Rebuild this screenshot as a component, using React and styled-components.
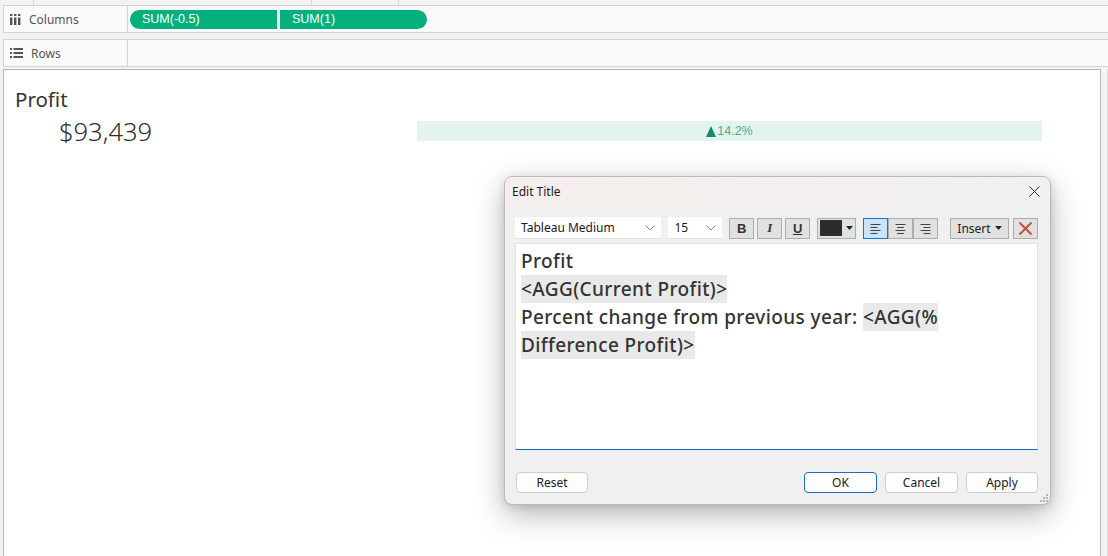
import React from "react";
import styled, { createGlobalStyle } from "styled-components";

const GlobalStyle = createGlobalStyle`
  html, body {
    margin: 0;
    padding: 0;
    background: #f3f3f3;
    overflow: hidden;
  }
  body {
    width: 1108px;
    height: 556px;
    font-family: "Noto Sans", "Open Sans", sans-serif;
  }
`;

const Page = styled.div`
  position: relative;
  display: flex;
  flex-direction: column;
  height: 556px;
  padding-left: 3px;
  box-sizing: border-box;
`;

const TopStrip = styled.div`
  display: flex;
  height: 5px;
  margin-left: -3px;
`;

const StripCell = styled.div`
  width: ${(p) => p.w}px;
  border-right: 1px solid #d6d6d6;
`;

const Shelf = styled.div`
  display: flex;
  height: 26px;
  border-top: 1px solid #d2d2d2;
  border-bottom: 1px solid #d2d2d2;
  border-left: 1px solid #d2d2d2;
  background: #fafafa;
  margin-bottom: ${(p) => p.mb}px;
`;

const ShelfLabel = styled.div`
  display: flex;
  align-items: center;
  gap: 8px;
  width: 124px;
  padding-left: 6px;
  box-sizing: border-box;
  border-right: 1px solid #d2d2d2;
  font-size: 12px;
  color: #555;
`;

const PillRow = styled.div`
  display: flex;
  align-items: center;
  gap: 3px;
  padding-left: 2px;
`;

const Pill = styled.div`
  width: 147px;
  height: 19px;
  box-sizing: border-box;
  padding-left: 12px;
  display: flex;
  align-items: center;
  background: #02b07d;
  color: #fff;
  font-family: "Liberation Sans", Arial, sans-serif;
  font-size: 12.5px;
  border-radius: ${(p) => (p.side === "left" ? "10px 0 0 10px" : "0 10px 10px 0")};
`;

const ViewRow = styled.div`
  display: flex;
  flex: 1;
`;

const View = styled.div`
  flex: 1;
  background: #fff;
  border: 1px solid #b4b4b4;
  border-bottom: none;
  padding: 16px 0 0 11px;
`;

const Gutter = styled.div`
  width: 7px;
  border-right: 1px solid #dcdcdc;
  box-sizing: border-box;
`;

const Title = styled.div`
  font-size: 20.5px;
  line-height: 26px;
  color: #333;
`;

const KpiRow = styled.div`
  display: flex;
  align-items: center;
  margin-top: 7px;
  margin-left: -11px;
`;

const KpiValue = styled.div`
  width: 413px;
  box-sizing: border-box;
  padding-left: 55px;
  font-size: 25.5px;
  font-weight: 300;
  color: #2e2e2e;
  line-height: 24px;
`;

const Band = styled.div`
  width: 625px;
  height: 20px;
  background: #e3f3ee;
  display: flex;
  align-items: center;
  justify-content: center;
  font-family: "Liberation Sans", Arial, sans-serif;
  font-size: 12.5px;
  color: #46b08c;
  gap: 1px;
`;

/* dialog */

const Dialog = styled.div`
  position: absolute;
  left: 504px;
  top: 176px;
  width: 547px;
  height: 329px;
  box-sizing: border-box;
  border: 1px solid #b9b9b9;
  border-radius: 8px;
  background: #f0f0f0;
  box-shadow: 0 10px 30px rgba(0, 0, 0, 0.28), 0 2px 8px rgba(0, 0, 0, 0.12);
  display: flex;
  flex-direction: column;
  overflow: hidden;
  font-size: 12px;
  color: #1b1b1b;
`;

const TitleBar = styled.div`
  height: 29px;
  display: flex;
  align-items: center;
  justify-content: space-between;
  padding: 0 10px 0 7px;
  background: linear-gradient(90deg, #f6eeec 0%, #f3f0ef 60%, #f2f1f1 100%);
`;

const Body = styled.div`
  flex: 1;
  display: flex;
  flex-direction: column;
  padding: 11px 12px 11px 10px;
`;

const Toolbar = styled.div`
  display: flex;
  align-items: center;
  gap: 7px;
  height: 22px;
`;

const Group = styled.div`
  display: flex;
  gap: ${(p) => p.gap || 0}px;
  margin-left: ${(p) => p.ml || 0}px;
`;

const Select = styled.div`
  width: ${(p) => p.w}px;
  height: 22px;
  box-sizing: border-box;
  background: #fff;
  border-bottom: 1px solid #e4e4e4;
  display: flex;
  align-items: center;
  justify-content: space-between;
  padding: 0 6px 0 6px;
  font-size: 12px;
`;

const ToolButton = styled.div`
  width: ${(p) => p.w || 25}px;
  height: 21px;
  box-sizing: border-box;
  border: 1px solid ${(p) => (p.active ? "#0a78d4" : "#adadad")};
  background: ${(p) => (p.active ? "#cce4f7" : "#e1e1e1")};
  display: flex;
  align-items: center;
  justify-content: center;
  gap: 4px;
  font-size: 12px;
  color: #222;
`;

const Glyph = styled.span`
  font-family: ${(p) => (p.serif ? '"Liberation Serif", serif' : '"Liberation Sans", Arial, sans-serif')};
  font-weight: bold;
  font-style: ${(p) => (p.italic ? "italic" : "normal")};
  text-decoration: ${(p) => (p.under ? "underline" : "none")};
  font-size: 13px;
  color: #333;
`;

const Swatch = styled.div`
  width: 22px;
  height: 16px;
  background: #2b2b2b;
`;

const Editor = styled.div`
  margin-top: 4px;
  height: 207px;
  box-sizing: border-box;
  background: #fff;
  border: 1px solid #e2e2e2;
  border-bottom: 1px solid #0f6cc6;
  padding: 3px 5px;
  font-size: 19px;
  font-weight: 500;
  letter-spacing: 0.4px;
  line-height: 28px;
  color: #333;
`;

const Field = styled.span`
  display: inline-block;
  background: #e9e9e9;
`;

const Footer = styled.div`
  display: flex;
  align-items: center;
  gap: 8px;
  margin-top: 22px;
  padding-left: 1px;
`;

const DlgButton = styled.div`
  width: ${(p) => p.w || 73}px;
  height: 21px;
  box-sizing: border-box;
  border: 1px solid ${(p) => (p.primary ? "#1a6fc4" : "#cfcfcf")};
  border-radius: 4px;
  background: #fdfdfd;
  display: flex;
  align-items: center;
  justify-content: center;
  font-size: 12px;
  color: #1b1b1b;
  margin-left: ${(p) => (p.push ? "auto" : "0")};
`;

const Grip = styled.svg`
  position: absolute;
  right: 2px;
  bottom: 2px;
`;

const Chevron = () => (
  <svg width="10" height="6" viewBox="0 0 10 6">
    <polyline points="0.5,0.5 5,5 9.5,0.5" fill="none" stroke="#888" strokeWidth="1" />
  </svg>
);

const Caret = () => (
  <svg width="7" height="4" viewBox="0 0 7 4">
    <polygon points="0,0 7,0 3.5,4" fill="#222" />
  </svg>
);

const AlignIcon = ({ mode }) => {
  const rows = [
    [10, 2],
    [7, 5],
    [10, 8],
    [7, 11],
  ];
  return (
    <svg width="11" height="12" viewBox="0 0 11 12">
      {rows.map(([w, y], i) => {
        const x = mode === "left" ? 0.5 : mode === "right" ? 10.5 - w : (11 - w) / 2;
        return <line key={i} x1={x} y1={y + 0.5} x2={x + w} y2={y + 0.5} stroke="#444" strokeWidth="1" />;
      })}
    </svg>
  );
};

const ColumnsIcon = () => (
  <svg width="11" height="11" viewBox="0 0 11 11">
    {[0, 4, 8].map((x) => (
      <g key={x} fill="#555">
        <rect x={x} y="0" width="2.4" height="2" />
        <rect x={x} y="3.5" width="2.4" height="7.5" />
      </g>
    ))}
  </svg>
);

const RowsIcon = () => (
  <svg width="13" height="10" viewBox="0 0 13 10">
    {[0, 4, 8].map((y) => (
      <g key={y} fill="#555">
        <rect x="0" y={y} width="2" height="2" />
        <rect x="3.5" y={y} width="9.5" height="2" />
      </g>
    ))}
  </svg>
);

const UpTriangle = () => (
  <svg width="10" height="11" viewBox="0 0 10 11">
    <polygon points="5,0 10,11 0,11" fill="#138a6a" />
  </svg>
);

export default function App() {
  return (
    <>
      <GlobalStyle />
      <Page>
        <TopStrip>
          <StripCell w={33} />
          <StripCell w={277} />
          <StripCell w={86} />
        </TopStrip>
        <Shelf mb={6}>
          <ShelfLabel>
            <ColumnsIcon />
            Columns
          </ShelfLabel>
          <PillRow>
            <Pill side="left">SUM(-0.5)</Pill>
            <Pill side="right">SUM(1)</Pill>
          </PillRow>
        </Shelf>
        <Shelf mb={2}>
          <ShelfLabel>
            <RowsIcon />
            Rows
          </ShelfLabel>
        </Shelf>
        <ViewRow>
          <View>
            <Title>Profit</Title>
            <KpiRow>
              <KpiValue>$93,439</KpiValue>
              <Band>
                <UpTriangle />
                14.2%
              </Band>
            </KpiRow>
          </View>
          <Gutter />
        </ViewRow>

        <Dialog>
          <TitleBar>
            <span>Edit Title</span>
            <svg width="11" height="11" viewBox="0 0 11 11">
              <path d="M0.5 0.5 L10.5 10.5 M10.5 0.5 L0.5 10.5" stroke="#333" strokeWidth="1" />
            </svg>
          </TitleBar>
          <Body>
            <Toolbar>
              <Select w={147}>
                Tableau Medium
                <Chevron />
              </Select>
              <Select w={54}>
                15
                <Chevron />
              </Select>
              <Group gap={3}>
                <ToolButton>
                  <Glyph>B</Glyph>
                </ToolButton>
                <ToolButton>
                  <Glyph serif italic>
                    I
                  </Glyph>
                </ToolButton>
                <ToolButton>
                  <Glyph under>U</Glyph>
                </ToolButton>
              </Group>
              <ToolButton w={39}>
                <Swatch />
                <Caret />
              </ToolButton>
              <Group>
                <ToolButton active>
                  <AlignIcon mode="left" />
                </ToolButton>
                <ToolButton>
                  <AlignIcon mode="center" />
                </ToolButton>
                <ToolButton>
                  <AlignIcon mode="right" />
                </ToolButton>
              </Group>
              <Group gap={4} ml={5}>
                <ToolButton w={59}>
                  Insert
                  <Caret />
                </ToolButton>
                <ToolButton>
                  <svg width="15" height="15" viewBox="0 0 15 15">
                    <path d="M1.5 1.5 L13.5 13.5 M13.5 1.5 L1.5 13.5" stroke="#c4523c" strokeWidth="2" />
                  </svg>
                </ToolButton>
              </Group>
            </Toolbar>
            <Editor>
              Profit
              <br />
              <Field>&lt;AGG(Current Profit)&gt;</Field>
              <br />
              Percent change from previous year: <Field>&lt;AGG(%</Field>
              <br />
              <Field>Difference Profit)&gt;</Field>
            </Editor>
            <Footer>
              <DlgButton w={72}>Reset</DlgButton>
              <DlgButton primary push>
                OK
              </DlgButton>
              <DlgButton>Cancel</DlgButton>
              <DlgButton w={72}>Apply</DlgButton>
            </Footer>
          </Body>
          <Grip width="8" height="8" viewBox="0 0 8 8">
            {[
              [6, 0],
              [3, 3],
              [6, 3],
              [0, 6],
              [3, 6],
              [6, 6],
            ].map(([x, y]) => (
              <rect key={`${x}-${y}`} x={x} y={y} width="2" height="2" fill="#b5b5b5" />
            ))}
          </Grip>
        </Dialog>
      </Page>
    </>
  );
}
